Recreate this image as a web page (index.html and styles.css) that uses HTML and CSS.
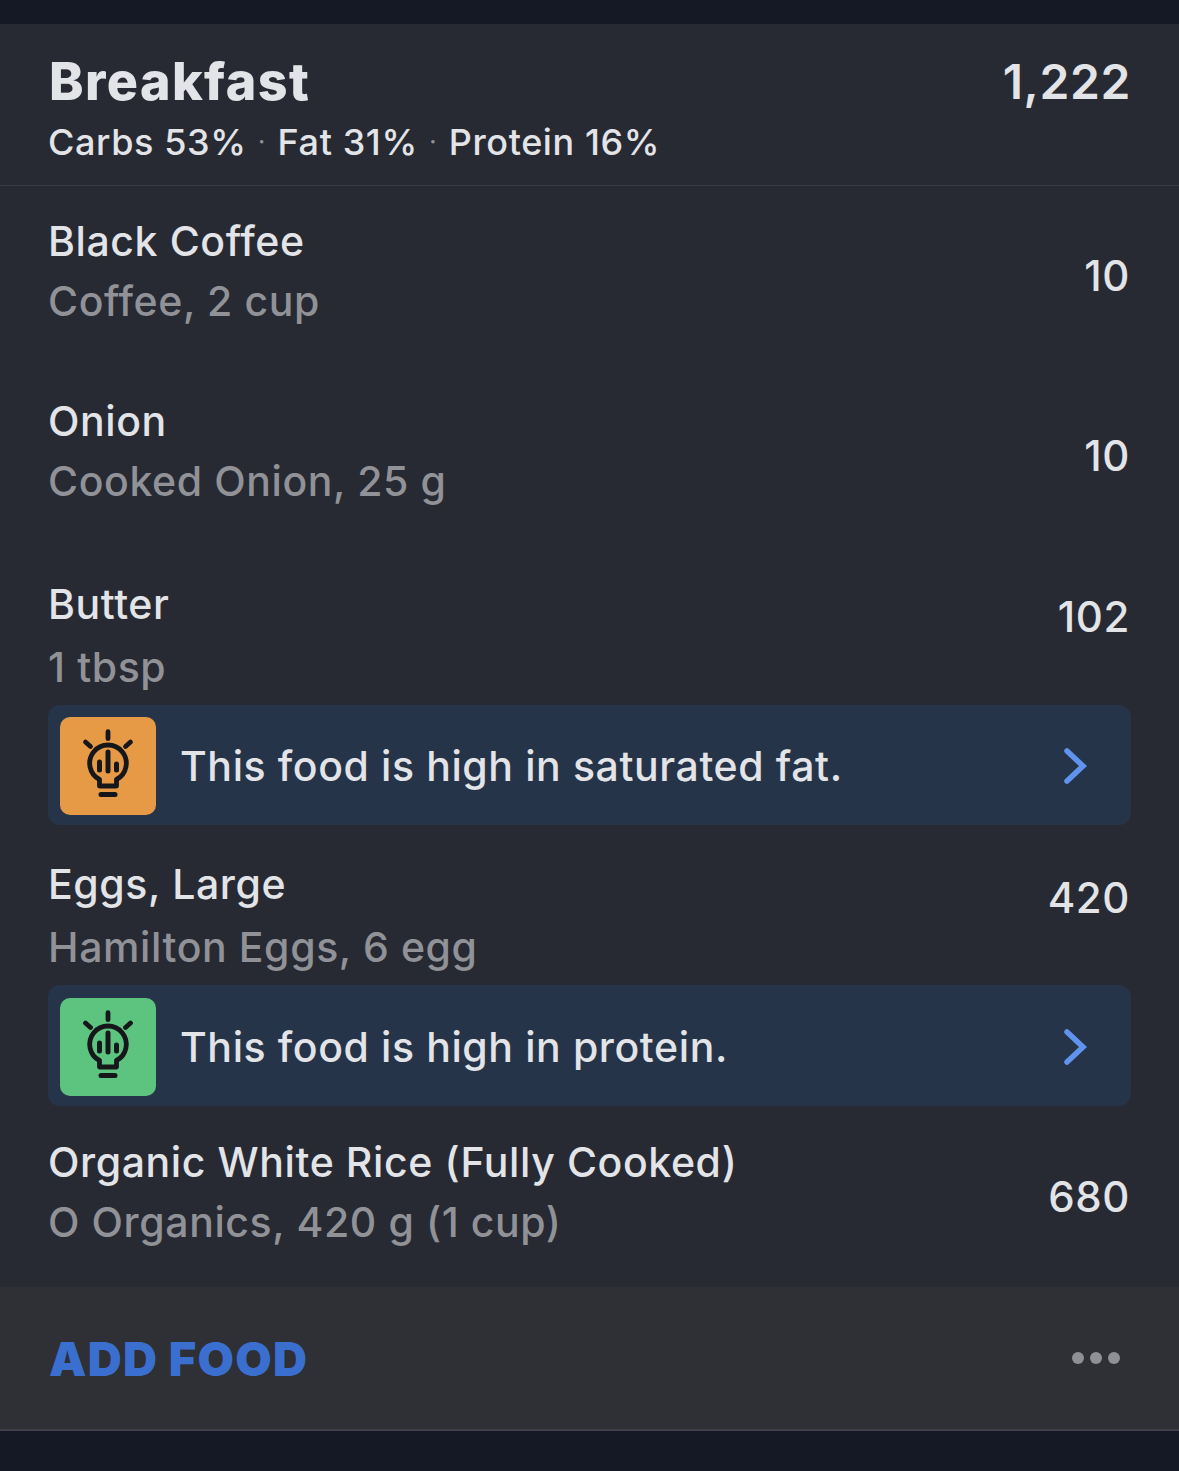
FILE: index.html
```html
<!DOCTYPE html>
<html lang="en">
<head>
    <meta charset="UTF-8">
    <title>Breakfast</title>
    <link rel="stylesheet" href="styles.css">
</head>

<body>
    <div class="card">
        <div class="meal-head">
            <div>
                <div class="meal-title">Breakfast</div>
                <div class="macros">
                    <span>Carbs 53%</span><span class="dot">·</span><span>Fat 31%</span><span class="dot">·</span><span>Protein 16%</span>
                </div>
            </div>
            <div class="meal-cals">1,222</div>
        </div>

        <div class="food">
            <div>
                <div class="name">Black Coffee</div>
                <div class="sub">Coffee, 2 cup</div>
            </div>
            <div class="cals">10</div>
        </div>

        <div class="food">
            <div>
                <div class="name">Onion</div>
                <div class="sub">Cooked Onion, 25 g</div>
            </div>
            <div class="cals">10</div>
        </div>

        <div class="food-tip first">
            <div class="food-top">
                <div>
                    <div class="name">Butter</div>
                    <div class="sub">1 tbsp</div>
                </div>
                <div class="cals">102</div>
            </div>
            <div class="tip">
                <div class="tip-icon orange">
                    <svg viewBox="0 0 96 98" width="96" height="98" fill="none" stroke="#16171b" stroke-width="4.8" stroke-linecap="round" stroke-linejoin="round">
                        <path d="M48 14.700v7M25.500 25l5 4.500M70.500 25l-5 4.500"/>
                        <path d="M39.500 69v-6.500a18.300 18.300 0 1 1 17 0V69z"/>
                        <path d="M48 35v19M39.500 45v8M56.500 47v6" stroke-width="5"/>
                        <path d="M41 77.500h14" stroke-width="5"/>
                    </svg>
                </div>
                <div class="tip-text">This food is high in saturated fat.</div>
                <svg class="chevron" viewBox="0 0 24 36" width="24" height="36" fill="none" stroke="#5f93ee" stroke-width="5.500" stroke-linecap="round" stroke-linejoin="miter">
                    <path d="M3 3l16 15L3 33"/>
                </svg>
            </div>
        </div>

        <div class="food-tip last">
            <div class="food-top">
                <div>
                    <div class="name">Eggs, Large</div>
                    <div class="sub">Hamilton Eggs, 6 egg</div>
                </div>
                <div class="cals">420</div>
            </div>
            <div class="tip">
                <div class="tip-icon green">
                    <svg viewBox="0 0 96 98" width="96" height="98" fill="none" stroke="#16171b" stroke-width="4.8" stroke-linecap="round" stroke-linejoin="round">
                        <path d="M48 14.700v7M25.500 25l5 4.500M70.500 25l-5 4.500"/>
                        <path d="M39.500 69v-6.500a18.300 18.300 0 1 1 17 0V69z"/>
                        <path d="M48 35v19M39.500 45v8M56.500 47v6" stroke-width="5"/>
                        <path d="M41 77.500h14" stroke-width="5"/>
                    </svg>
                </div>
                <div class="tip-text">This food is high in protein.</div>
                <svg class="chevron" viewBox="0 0 24 36" width="24" height="36" fill="none" stroke="#5f93ee" stroke-width="5.500" stroke-linecap="round" stroke-linejoin="miter">
                    <path d="M3 3l16 15L3 33"/>
                </svg>
            </div>
        </div>

        <div class="food">
            <div>
                <div class="name">Organic White Rice (Fully Cooked)</div>
                <div class="sub">O Organics, 420 g (1 cup)</div>
            </div>
            <div class="cals">680</div>
        </div>

        <div class="meal-foot">
            <div class="add-food">ADD FOOD</div>
            <div class="more"><span></span><span></span><span></span></div>
        </div>
    </div>
</body></html>
```

FILE: styles.css
```css
html, body {
    margin: 0;
    height: 1471px;
    overflow: hidden;
    background-color: #151825;
}

body {
    padding-top: 24px;
    box-sizing: border-box;
    font-family: Inter, "Liberation Sans", sans-serif;
    color: #e3e4e8;
}

.card {
    background-color: #272a33;
    border-bottom: 2px solid #3e3f4a;
}

/* header */
.meal-head {
    display: flex;
    justify-content: space-between;
    height: 162px;
    box-sizing: border-box;
    padding: 28px 48px 0 48px;
    border-bottom: 1px solid #3a3d47;
}

.meal-title {
    font-size: 52px;
    font-weight: 800;
    line-height: 60px;
    letter-spacing: 1.4px;
    margin-left: 1px;
}

.macros {
    display: flex;
    font-size: 36px;
    font-weight: 500;
    line-height: 42px;
    letter-spacing: 0.6px;
    margin-top: 9px;
}

.dot {
    color: #8b8e95;
    font-size: 24px;
    width: 31px;
    text-align: center;
}

.meal-cals {
    font-size: 48px;
    font-weight: 600;
    line-height: 60px;
    letter-spacing: 0.6px;
}

/* rows */
.food {
    display: flex;
    justify-content: space-between;
    align-items: center;
    height: 180px;
    box-sizing: border-box;
    padding: 25px 49px 35px 48px;
}

.food .cals {
    margin-top: 10px;
}

.food-tip {
    padding: 28px 48px 0;
}

.food-tip.first {
    padding-top: 27px;
}

.food-tip.last {
    padding-bottom: 1px;
}

.food-top {
    display: flex;
    justify-content: space-between;
    padding-right: 1px;
}

.food-tip .name,
.food-tip .sub {
    line-height: 63px;
}

.food-tip .cals {
    margin-top: 14px;
}

.food-tip.last .cals {
    margin-top: 15px;
}

.name {
    font-size: 41px;
    font-weight: 500;
    line-height: 60px;
    letter-spacing: 0.6px;
}

.sub {
    font-size: 41px;
    font-weight: 500;
    line-height: 60px;
    letter-spacing: 0.6px;
    color: #909297;
}

.cals {
    font-size: 42px;
    font-weight: 500;
    line-height: 60px;
    letter-spacing: 0.6px;
}

/* tip banner */
.tip {
    display: flex;
    align-items: center;
    height: 120px;
    box-sizing: border-box;
    margin-top: 6px;
    padding: 2px 43px 0 12px;
    background-color: #263449;
    border-radius: 12px;
}

.food-tip.last .tip {
    height: 121px;
}

.tip-icon {
    width: 96px;
    height: 98px;
    border-radius: 10px;
    flex: none;
}

.tip-icon svg {
    display: block;
}

.orange {
    background-color: #e79a45;
}

.green {
    background-color: #5dc47f;
}

.tip-text {
    flex: 1;
    margin-left: 24px;
    font-size: 41px;
    font-weight: 500;
    letter-spacing: 0.6px;
}

/* footer */
.meal-foot {
    display: flex;
    justify-content: space-between;
    align-items: center;
    height: 142px;
    box-sizing: border-box;
    padding: 0 59px 0 49px;
    background-color: #2f3036;
}

.add-food {
    font-size: 47px;
    font-weight: 900;
    letter-spacing: 1.3px;
    color: #3a6fd0;
}

.more {
    display: flex;
    gap: 6px;
}

.more span {
    width: 12px;
    height: 12px;
    border-radius: 50%;
    background-color: #8f9095;
}
```
